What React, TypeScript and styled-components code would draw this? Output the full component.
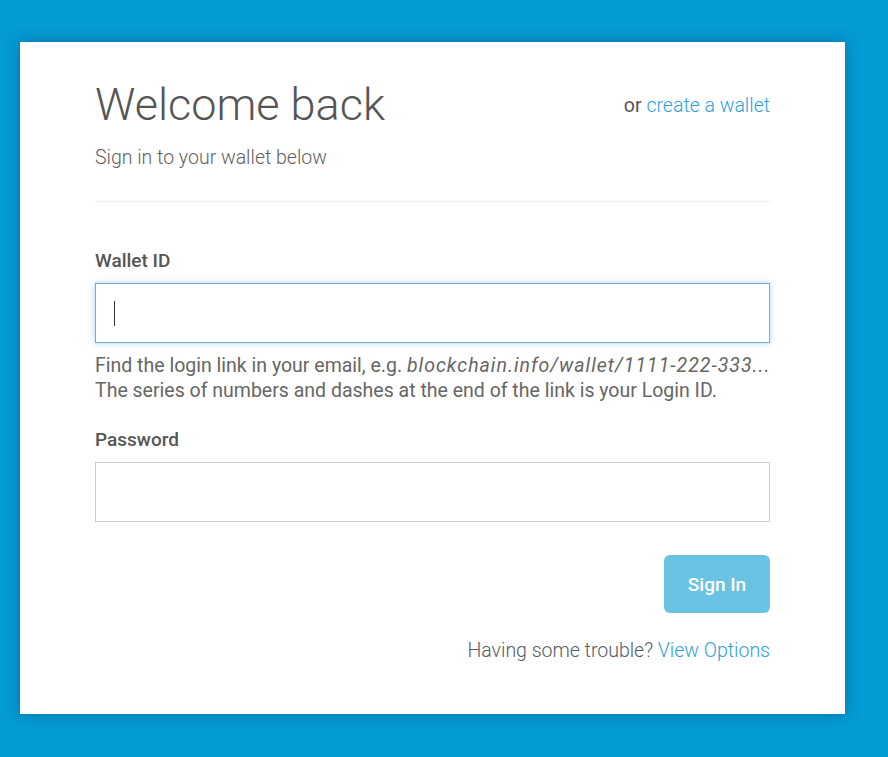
import React from "react";
import styled, { createGlobalStyle, css } from "styled-components";

const GlobalStyle = createGlobalStyle`
  html, body {
    margin: 0;
    padding: 0;
    background: #059bd4;
  }
  body {
    font-family: Roboto, "Liberation Sans", Arial, sans-serif;
    -webkit-font-smoothing: antialiased;
  }
`;

const Page = styled.div`
  min-height: 757px;
  padding: 42px 0 0 20px;
  box-sizing: border-box;
`;

const Card = styled.div`
  width: 825px;
  height: 672px;
  box-sizing: border-box;
  background: #ffffff;
  padding: 35px 75px 0 75px;
  box-shadow: 0 0 14px rgba(0, 40, 70, 0.35);
  display: flex;
  flex-direction: column;
`;

const Header = styled.div`
  display: flex;
  justify-content: space-between;
  align-items: flex-start;
`;

const Title = styled.h1`
  margin: 0;
  font-size: 45px;
  line-height: 56px;
  font-weight: 300;
  color: #555555;
`;

const Subtitle = styled.p`
  margin: 13px 0 0 0;
  font-size: 19.5px;
  line-height: 24px;
  font-weight: 300;
  color: #5f5f5f;
`;

const Aside = styled.div`
  margin-top: 17px;
  font-size: 19.5px;
  line-height: 24px;
  font-weight: 400;
  color: #555555;
`;

const Link = styled.a`
  color: #2f9fdb;
  font-weight: 300;
  text-decoration: none;
  cursor: pointer;
`;

const Divider = styled.hr`
  margin: 31px 0 0 0;
  border: 0;
  height: 1px;
  background: #ececec;
`;

const Field = styled.div<{ $gap: number }>`
  margin-top: ${({ $gap }) => $gap}px;
  display: flex;
  flex-direction: column;
`;

const Label = styled.label`
  font-size: 19px;
  line-height: 24px;
  font-weight: 500;
  color: #555555;
`;

const InputWrap = styled.div`
  position: relative;
  margin-top: 10px;
`;

const Input = styled.input<{ $focused?: boolean }>`
  display: block;
  width: 100%;
  height: 60px;
  box-sizing: border-box;
  border: 1px solid #cccccc;
  border-radius: 0;
  padding: 0 18px;
  font-family: inherit;
  font-size: 19px;
  color: #444;
  outline: none;
  background: #fff;
  ${({ $focused }) =>
    $focused &&
    css`
      border-color: #72ace6;
      box-shadow: 0 0 6px rgba(102, 170, 235, 0.55);
    `}
`;

const Caret = styled.span`
  position: absolute;
  left: 19px;
  top: 18px;
  width: 1px;
  height: 25px;
  background: #333;
`;

const Help = styled.p`
  margin: 10px 0 0 0;
  font-size: 19.5px;
  line-height: 25px;
  font-weight: 400;
  color: #666666;
  white-space: nowrap;

  em {
    font-style: italic;
    letter-spacing: 1px;
  }
`;

const Actions = styled.div`
  margin-top: 33px;
  display: flex;
  justify-content: flex-end;
`;

const Button = styled.button`
  width: 106px;
  height: 58px;
  border: 0;
  border-radius: 6px;
  background: #6bc3e4;
  color: #ffffff;
  font-family: inherit;
  font-size: 19px;
  font-weight: 500;
  cursor: pointer;
`;

const Footer = styled.div`
  margin-top: 26px;
  text-align: right;
  font-size: 19.5px;
  line-height: 24px;
  font-weight: 300;
  color: #555a66;
`;

export default function App() {
  return (
    <>
      <GlobalStyle />
      <Page>
        <Card>
          <Header>
            <div>
              <Title>Welcome back</Title>
              <Subtitle>Sign in to your wallet below</Subtitle>
            </div>
            <Aside>
              or <Link>create a wallet</Link>
            </Aside>
          </Header>
          <Divider />

          <Field $gap={47}>
            <Label htmlFor="wallet-id">Wallet ID</Label>
            <InputWrap>
              <Input id="wallet-id" type="text" $focused />
              <Caret />
            </InputWrap>
            <Help>
              Find the login link in your email, e.g. <em>blockchain.info/wallet/1111-222-333...</em>
              <br />
              The series of numbers and dashes at the end of the link is your Login ID.
            </Help>
          </Field>

          <Field $gap={25}>
            <Label htmlFor="password">Password</Label>
            <InputWrap>
              <Input id="password" type="password" />
            </InputWrap>
          </Field>

          <Actions>
            <Button>Sign In</Button>
          </Actions>

          <Footer>
            Having some trouble? <Link>View Options</Link>
          </Footer>
        </Card>
      </Page>
    </>
  );
}
